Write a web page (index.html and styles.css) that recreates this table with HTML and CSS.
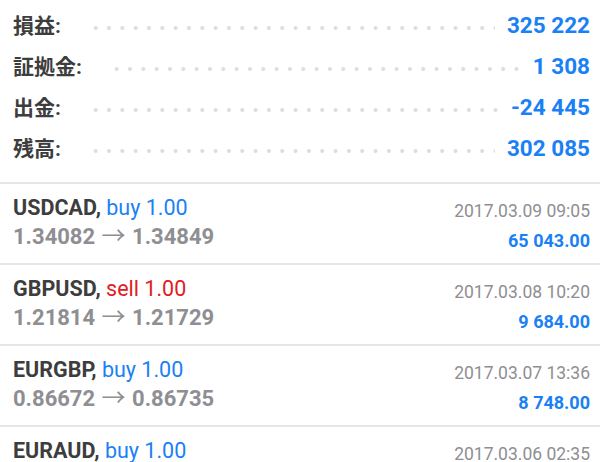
FILE: index.html
```html
<!DOCTYPE html>
<html lang="ja">
<head>
<meta charset="utf-8">
<link rel="stylesheet" href="styles.css">
</head>
<body>
<div class="summary">
  <div class="srow"><span class="label">損益:</span><span class="leader"></span><span class="val">325 222</span></div>
  <div class="srow"><span class="label">証拠金:</span><span class="leader"></span><span class="val">1 308</span></div>
  <div class="srow"><span class="label">出金:</span><span class="leader"></span><span class="val">-24 445</span></div>
  <div class="srow"><span class="label">残高:</span><span class="leader"></span><span class="val">302 085</span></div>
</div>
<div class="trades">
  <div class="trade">
    <div class="left">
      <div class="l1"><span class="sym">USDCAD,</span> <span class="buy">buy 1.00</span></div>
      <div class="l2">1.34082 <span class="arrow">→</span> 1.34849</div>
    </div>
    <div class="right">
      <div class="date">2017.03.09 09:05</div>
      <div class="amt">65 043.00</div>
    </div>
  </div>
  <div class="trade">
    <div class="left">
      <div class="l1"><span class="sym">GBPUSD,</span> <span class="sell">sell 1.00</span></div>
      <div class="l2">1.21814 <span class="arrow">→</span> 1.21729</div>
    </div>
    <div class="right">
      <div class="date">2017.03.08 10:20</div>
      <div class="amt">9 684.00</div>
    </div>
  </div>
  <div class="trade">
    <div class="left">
      <div class="l1"><span class="sym">EURGBP,</span> <span class="buy">buy 1.00</span></div>
      <div class="l2">0.86672 <span class="arrow">→</span> 0.86735</div>
    </div>
    <div class="right">
      <div class="date">2017.03.07 13:36</div>
      <div class="amt">8 748.00</div>
    </div>
  </div>
  <div class="trade">
    <div class="left">
      <div class="l1"><span class="sym">EURAUD,</span> <span class="buy">buy 1.00</span></div>
    </div>
    <div class="right">
      <div class="date">2017.03.06 02:35</div>
    </div>
  </div>
</div>
</body>
</html>
```
FILE: styles.css
```css
* { box-sizing: border-box; }
html, body {
  margin: 0;
  padding: 0;
  background: #ffffff;
  overflow: hidden;
}
body {
  width: 600px;
  height: 462px;
  font-family: Roboto, "Noto Sans CJK JP", sans-serif;
}
.summary {
  padding: 5px 10px 13px 13px;
}
.srow {
  display: flex;
  align-items: baseline;
  height: 41px;
  line-height: 41px;
}
.label {
  font-size: 21px;
  font-weight: 700;
  color: #3d3d3d;
}
.leader {
  flex: 1;
  align-self: center;
  height: 4px;
  margin: 4px 12px 0 28px;
  background-image: radial-gradient(circle at center, #dedede 1.7px, rgba(222,222,222,0) 2.3px);
  background-size: 13.33px 4px;
  background-repeat: repeat-x;
  background-position: left center;
}
.val {
  font-size: 22.5px;
  font-weight: 700;
  color: #1a80f5;
}
.trade {
  display: flex;
  justify-content: space-between;
  height: 81px;
  border-top: 2px solid #e6e6e6;
  padding: 0 10px 0 13px;
}
.left {
  padding-top: 9px;
}
.right {
  padding-top: 13px;
  text-align: right;
}
.l1, .l2, .date, .amt {
  line-height: 29px;
  white-space: nowrap;
}
.l1 {
  font-size: 21.5px;
}
.sym {
  font-weight: 700;
  color: #3d3d3d;
}
.buy {
  color: #1a80f5;
}
.sell {
  color: #e0201f;
}
.l2 {
  font-size: 22px;
  font-weight: 700;
  color: #8e8e93;
}
.arrow {
  font-weight: 400;
  font-size: 24px;
  margin: 0 1px;
}
.date {
  font-size: 17.5px;
  color: #8e8e93;
}
.amt {
  font-size: 18px;
  font-weight: 700;
  color: #1a80f5;
}
```
